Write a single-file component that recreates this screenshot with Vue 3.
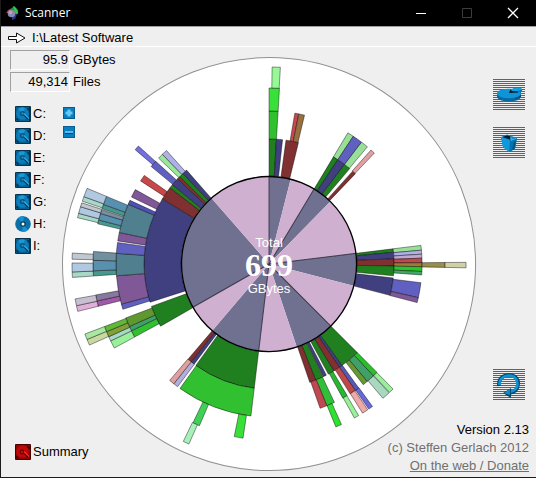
<script setup>
const drives = [
  { name: 'C:', kind: 'disk' },
  { name: 'D:', kind: 'disk' },
  { name: 'E:', kind: 'disk' },
  { name: 'F:', kind: 'disk' },
  { name: 'G:', kind: 'disk' },
  { name: 'H:', kind: 'cd' },
  { name: 'I:', kind: 'disk' },
]

// Ring boundaries, from the inner disc outwards
const radii = [88, 125, 153, 176, 197]

// Boundaries of the inner slices, alternating dark and light, clockwise from the top
const bounds = [0, 14.3, 31, 44.4, 83, 104.4, 135.1, 161.5, 186.8, 220.4, 240.4, 318.9, 360]

// [ring, start angle, end angle, colour]
const segments = [
  [1, 0, 3.4, '#208020'], [1, 3.4, 6.2, '#404080'], [2, 0, 3.4, '#30c030'],
  [3, 0, 3.4, '#38e038'], [4, 0.9, 3.3, '#98f898'],
  [1, 7.8, 13.6, '#803030'], [2, 9.7, 11.2, '#c84850'], [2, 11.2, 13.4, '#987040'],

  [1, 31, 33.4, '#208020'], [1, 33.4, 37.2, '#404080'], [1, 37.2, 40.2, '#208020'],
  [2, 31, 33.4, '#98e098'], [2, 33.4, 37.2, '#6060c0'], [2, 37.2, 40, '#98e098'],
  [1, 42, 43.7, '#803030'], [2, 41.8, 43.5, '#e0a0a0'],

  [1, 83, 84.6, '#208020'], [1, 84.6, 87.6, '#404080'], [1, 87.6, 90.9, '#803030'],
  [1, 90.9, 95.4, '#208020'], [1, 96.4, 104.5, '#404080'],
  [2, 83, 84.8, '#98e098'], [2, 84.8, 86.3, '#b0b0e8'], [2, 86.3, 87.8, '#c0a8d0'],
  [2, 87.8, 89.5, '#c04848'], [2, 89.5, 91, '#a07838'], [2, 91, 92.8, '#28c828'],
  [2, 92.8, 94.1, '#40a868'], [2, 97, 102.7, '#6060c0'], [2, 102.7, 104.6, '#805898'],
  [3, 89.5, 91.1, '#989048'], [4, 89.5, 91.1, '#d0d0a8'],

  [1, 135.1, 144.3, '#208020'], [1, 144.3, 145.7, '#404080'], [1, 145.7, 148.8, '#803030'],
  [1, 148.8, 151.7, '#208020'], [1, 152.7, 154.3, '#404080'],
  [1, 154.5, 158.1, '#208020'], [1, 158.1, 161, '#803030'],
  [2, 135.1, 137, '#28c028'], [2, 137, 140.1, '#40a068'], [2, 140.1, 142, '#689830'],
  [2, 144.1, 145.7, '#5858b8'], [2, 145.7, 148, '#c04848'], [2, 149.3, 151.2, '#28b830'],
  [2, 154.7, 157.8, '#30c038'], [2, 157.8, 160.5, '#c04850'],
  [3, 135.2, 136.8, '#98f098'], [3, 137, 139.7, '#a8d8c0'], [3, 144, 145.5, '#6868d8'],
  [3, 145.9, 147.9, '#f0a8a8'], [3, 149.4, 151, '#98f098'], [3, 155.7, 157.7, '#30e030'],

  [1, 186.8, 215.8, '#208020'], [1, 216.8, 218.5, '#404080'], [1, 218.5, 220.4, '#803030'],
  [2, 186.8, 215.6, '#30c030'], [2, 216.7, 218.5, '#b0b0e0'], [2, 218.5, 220.5, '#e0a0a0'],
  [3, 188.5, 191.4, '#38e038'], [3, 203.3, 205.6, '#40d058'], [4, 204, 205.8, '#a8f0b8'],

  [1, 240.2, 250.2, '#208020'], [2, 241.5, 244.1, '#30c030'], [2, 244.1, 245.9, '#40a068'],
  [2, 245.9, 249.4, '#609830'], [3, 241.5, 244.1, '#98f098'], [3, 244.1, 245.6, '#a8d8c8'],
  [3, 245.6, 247.4, '#80a038'], [3, 247.4, 249.2, '#60b838'],
  [4, 245.7, 247.5, '#c8d8a0'], [4, 247.5, 249.2, '#a8e8a0'],

  [1, 252.2, 301.4, '#404080'],
  [2, 252.8, 254.8, '#6060c0'], [2, 254.8, 265.6, '#805898'], [2, 265.6, 274, '#508090'],
  [2, 274, 278.1, '#6060c0'], [2, 278.7, 281.9, '#805898'], [2, 281.9, 293, '#508090'],
  [2, 293, 294.6, '#5050b8'], [2, 296, 299.1, '#805898'],
  [3, 256.1, 257.9, '#a058a8'], [3, 257.9, 259.9, '#8878a0'],
  [3, 266.1, 267.8, '#489890'], [3, 267.8, 271.2, '#5890b0'], [3, 271.2, 274.1, '#7090a0'],
  [3, 283.2, 284.5, '#489890'], [3, 284.5, 286.7, '#5890b0'], [3, 286.7, 288, '#7890a0'],
  [3, 288.3, 289.8, '#489890'], [3, 289.8, 292.6, '#5890b0'],
  [4, 256.1, 257.8, '#e0b0d8'], [4, 257.8, 259.8, '#c8c0d0'],
  [4, 266.1, 267.7, '#a8d8c8'], [4, 267.7, 270.3, '#b0c8e0'], [4, 271.4, 273.2, '#c0c8d0'],
  [4, 283.6, 284.9, '#a8d8c8'], [4, 284.9, 286.9, '#b0c8e0'], [4, 286.9, 288.1, '#c0c8d0'],
  [4, 288.6, 290, '#a8d8c8'], [4, 290, 292.6, '#b0c8e0'],

  [1, 301.4, 307.6, '#803030'], [1, 307.6, 309.4, '#208020'], [1, 309.4, 313, '#404080'],
  [1, 313, 314.4, '#803030'], [1, 314.4, 316.4, '#208020'], [1, 316.4, 318.7, '#404080'],
  [2, 302.9, 305.4, '#c84848'], [2, 309.6, 312.2, '#6060c0'], [3, 310.5, 312.1, '#7070e0'],
  [2, 313.8, 315.8, '#98e898'], [2, 315.8, 317.9, '#b0b0e8'],
]

function point(radius, angle) {
  const rad = (angle * Math.PI) / 180
  return `${(radius * Math.sin(rad)).toFixed(2)} ${(-radius * Math.cos(rad)).toFixed(2)}`
}

function arcPath([ring, from, to]) {
  const inner = radii[ring - 1]
  const outer = radii[ring]
  return `M${point(inner, from)}L${point(outer, from)}A${outer} ${outer} 0 0 1 ${point(outer, to)}L${point(inner, to)}A${inner} ${inner} 0 0 0 ${point(inner, from)}Z`
}

const slices = bounds.slice(0, -1).map((from, i) => ({
  path: `M0 0L${point(88, from)}A88 88 0 0 1 ${point(88, bounds[i + 1])}Z`,
  color: i % 2 ? '#d0b0d0' : '#707090',
}))
const spokes = bounds.slice(0, -1).filter((_, i) => i % 2 === 0).map((a) => `M0 0L${point(88, a)}`)
const shapes = segments.map((s) => ({ path: arcPath(s), color: s[3] }))
</script>

<template>
  <div class="window">
    <header class="titlebar">
      <svg class="app-icon" viewBox="0 0 14 14" aria-hidden="true">
        <path d="M5 3L8 0L12 4V8H8Z" fill="#18a038" />
        <path d="M7 0L10 2L12 7L10 8Z" fill="#30c850" />
        <path d="M2 4L6 2V7H0Z" fill="#a83848" />
        <path d="M6 9L11 8L9 13L6 14Z" fill="#283888" />
        <circle cx="5.500" cy="7.500" r="3.800" fill="#8c88aa" />
        <circle cx="4.500" cy="6.500" r="1.800" fill="#b4a8c0" />
      </svg>
      <h1>Scanner</h1>
      <div class="controls">
        <button type="button" aria-label="Minimize"><svg viewBox="0 0 12 12"><path d="M1 6.500H11" stroke="#fff" /></svg></button>
        <button type="button" aria-label="Maximize" disabled><svg viewBox="0 0 12 12"><path d="M1.500 1.500H10.500V10.500H1.500Z" stroke="#3c3c3c" /></svg></button>
        <button type="button" aria-label="Close"><svg viewBox="0 0 12 12"><path d="M1 1L11 11M11 1L1 11" stroke="#fff" stroke-width="1.300" /></svg></button>
      </div>
    </header>

    <div class="path">
      <svg viewBox="0 0 18 12" aria-hidden="true">
        <path d="M0.500 4.500H8.500V1L17 6L8.500 11V7.500H0.500Z" fill="#fff" stroke="#111" />
      </svg>
      <span>I:\Latest Software</span>
    </div>

    <main class="stage">
      <svg class="chart" viewBox="0 0 418 418" role="img" aria-label="Disk usage">
        <g transform="translate(209 209)">
          <circle r="206.500" fill="#fff" stroke="#909090" />
          <path v-for="(s, i) in shapes" :key="i" :d="s.path" :fill="s.color" class="segment" />
          <path v-for="(s, i) in slices" :key="'s' + i" :d="s.path" :fill="s.color" />
          <path v-for="d in spokes" :key="d" :d="d" class="spoke" />
          <circle r="87.500" class="rim" />
          <text y="-17" class="caption">Total</text>
          <text y="12" class="total">699</text>
          <text y="29" class="caption">GBytes</text>
        </g>
      </svg>

      <aside class="left">
        <dl class="stats">
          <div><dd>95.9</dd><dt>GBytes</dt></div>
          <div><dd>49,314</dd><dt>Files</dt></div>
        </dl>
        <div class="drive-area">
          <ul class="drives">
            <li v-for="d in drives" :key="d.name">
              <button type="button" class="drive">
                <svg v-if="d.kind === 'disk'" viewBox="0 0 16 16" aria-hidden="true">
                  <rect width="16" height="16" rx="1" fill="#06344e" />
                  <rect x="1" y="1" width="13" height="14" fill="#075f90" />
                  <circle cx="7.500" cy="7.500" r="6.300" fill="#087fbc" />
                  <path d="M3 3A6 6 0 0 1 10 2L7.500 7.500Z" fill="#1e98d4" />
                  <circle cx="7.500" cy="7.500" r="2.600" fill="#075078" />
                  <circle cx="7.500" cy="7.500" r="1.200" fill="#1e88bc" />
                  <path d="M9.500 9.500L13 13" fill="none" stroke="#03283e" stroke-width="1.200" />
                  <path d="M9 7.500L14 12.500" fill="none" stroke="#38a8dc" stroke-width="1.200" />
                  <path d="M12 3H14V5M2 12V14H4" fill="none" stroke="#03283e" />
                </svg>
                <svg v-else viewBox="0 0 16 16" aria-hidden="true">
                  <circle cx="8" cy="8" r="7.800" fill="#0a70a8" />
                  <path d="M8 8L3 2A8 8 0 0 1 9 0ZM8 8L13 14A8 8 0 0 1 7 16Z" fill="#1c90cc" />
                  <circle cx="8" cy="8" r="2.800" fill="#064060" />
                  <circle cx="8" cy="8" r="1.500" fill="#fff" />
                </svg>
                <span>{{ d.name }}</span>
              </button>
            </li>
          </ul>
          <div class="zoom">
            <button type="button" aria-label="Show more"><svg viewBox="0 0 12 12"><path d="M0 0H12V12H0Z" fill="#0a5c8e" /><path d="M1 1H11V11H1Z" fill="#0880c0" /><path d="M4.500 2.500H7.500V4.500H9.500V7.500H7.500V9.500H4.500V7.500H2.500V4.500H4.500Z" fill="#68c8f8" /></svg></button>
            <button type="button" aria-label="Show less"><svg viewBox="0 0 12 12"><path d="M0 0H12V12H0Z" fill="#0a5c8e" /><path d="M1 1H11V11H1Z" fill="#0880c0" /><path d="M2 5H10V8H2Z" fill="#044870" /><path d="M2 5H10V7H2Z" fill="#58bcf0" /></svg></button>
          </div>
        </div>
        <button type="button" class="drive summary">
          <svg viewBox="0 0 16 16" aria-hidden="true">
            <rect width="16" height="16" rx="1" fill="#480000" />
            <rect x="1" y="1" width="14" height="14" fill="#900404" />
            <circle cx="7.500" cy="7.500" r="6.300" fill="#c00808" />
            <circle cx="7" cy="8" r="2.400" fill="#700000" />
            <circle cx="7" cy="8" r="1.200" fill="#b01818" />
            <path d="M9.500 9.500L13 13M12 3H14V5M2 12V14H4" fill="none" stroke="#380000" stroke-width="1.200" />
            <path d="M9 7.500L14 12.500" fill="none" stroke="#f03030" stroke-width="1.200" />
          </svg>
          <span>Summary</span>
        </button>
      </aside>

      <aside class="right">
        <div class="tools">
          <button type="button" class="tool" aria-label="Free space">
            <svg viewBox="0 0 32 31">
              <path d="M4 15V18C5 21 10 22.500 16 22.500S27 21 28 18V13Z" fill="#0868a0" />
              <path d="M22 20.500L28 18V13L22 16Z" fill="#054870" />
              <ellipse cx="16" cy="14.500" rx="12" ry="4.800" fill="#0e94d8" />
              <path d="M16 13L20 9.500C23 8.500 27 8.500 29 10V13L24 13.500Z" fill="#0878b4" />
              <path d="M17 12.500L20 9.500C23 8.500 27 8.500 29 10L24 12.500Z" fill="#10a0e4" />
              <path d="M16 14L17.500 10.500L19 12L25 12.500V13.500Z" fill="#021c2c" />
            </svg>
          </button>
          <button type="button" class="tool" aria-label="Recycle bin">
            <svg viewBox="0 0 32 31">
              <path d="M8 10L14 7.500L24 11L22 22L16 25L10 20Z" fill="#0a84c4" />
              <path d="M9.500 10L14 8.500L18 9.500L17 12.500Z" fill="#021824" />
              <path d="M17 13L24 11L22 22L16 25Z" fill="#0672ae" />
              <path d="M8 10L17 13.500L16 25L10 20Z" fill="#1098dc" />
              <path d="M17 9L20 12L24 10.500L23 12L18 14Z" fill="#38acE4" />
              <path d="M21 15L23 14L21 22L19 23Z" fill="#045480" />
            </svg>
          </button>
        </div>
        <div class="bottom">
          <button type="button" class="tool" aria-label="Rescan">
            <svg viewBox="0 0 32 31">
              <path d="M6 17C5 10 10 6 16 6C23 6 26 11 25 16C24.500 20 22 23 17 24" fill="none" stroke="#054870" stroke-width="3.600" />
              <path d="M6.500 16C6 10 11 6.500 16 6.500C21.500 6.500 25 11 24.500 16C24 19 21 22 17 23" fill="none" stroke="#0e94d4" stroke-width="2.600" />
              <path d="M10 24L18 19V29Z" fill="#054870" />
              <path d="M11 24L17 20V26Z" fill="#0e8cc8" />
            </svg>
          </button>
          <p class="version">Version 2.13</p>
          <p class="credit">(c) Steffen Gerlach 2012</p>
          <p class="credit"><a href="#">On the web / Donate</a></p>
        </div>
      </aside>
    </main>
  </div>
</template>

<style>
body {
  margin: 0;
}
</style>

<style scoped>
.window {
  display: flex;
  flex-direction: column;
  min-height: 100vh;
  box-sizing: border-box;
  border-left: 1px solid #1c1c1c;
  border-bottom: 1px solid #1c1c1c;
  background: #efefef;
  color: #000;
  font: 13px/18px "Liberation Sans", Arial, sans-serif;
}
button {
  margin: 0;
  padding: 0;
  border: 0;
  background: none;
  color: inherit;
  font: inherit;
}
svg {
  display: block;
}
h1, p, dl, dd, ul {
  margin: 0;
  padding: 0;
}
.titlebar {
  display: flex;
  align-items: center;
  height: 26px;
  padding-left: 5px;
  background: #000;
  color: #fff;
}
.app-icon {
  width: 14px;
  height: 14px;
}
h1 {
  margin-left: 5px;
  font: 12px/18px "Open Sans", "Noto Sans", sans-serif;
}
.controls {
  display: flex;
  margin-left: auto;
}
.controls button {
  display: grid;
  place-items: center;
  width: 46px;
  height: 26px;
}
.controls svg {
  width: 12px;
  height: 12px;
  fill: none;
}
.path {
  display: flex;
  align-items: center;
  gap: 6px;
  height: 21px;
  padding: 2px 7px 0;
  box-sizing: border-box;
  border-top: 1px solid #a0a0a0;
  border-bottom: 1px solid #fff;
}
.path svg {
  width: 18px;
  height: 12px;
}
.stage {
  flex: 1;
  display: grid;
  grid-template-columns: auto 1fr auto;
}
.chart {
  grid-area: 1 / 1 / 2 / -1;
  justify-self: center;
  align-self: start;
  width: 78vw;
  margin: 8px 0 0 2px;
}
.segment {
  stroke: #000;
  stroke-opacity: 0.6;
  stroke-width: 0.7;
}
.spoke {
  stroke: #202030;
  stroke-opacity: 0.8;
}
.rim {
  fill: none;
  stroke: #000;
  stroke-width: 1.3;
}
.caption {
  fill: #fff;
  font-size: 13px;
  text-anchor: middle;
}
.total {
  fill: #fff;
  font: bold 32px "Liberation Serif", "Times New Roman", serif;
  text-anchor: middle;
}
.left {
  grid-area: 1 / 1;
  display: flex;
  flex-direction: column;
  align-items: flex-start;
  padding: 3px 0 17px 9px;
}
.stats {
  display: flex;
  flex-direction: column;
  gap: 2px;
}
.stats div {
  display: flex;
  gap: 3px;
}
.stats dd {
  width: 60px;
  height: 20px;
  box-sizing: border-box;
  padding-right: 1px;
  border: 1px solid;
  border-color: #a0a0a0 #fff #fff #a0a0a0;
  text-align: right;
}
.stats dt {
  line-height: 20px;
}
.drive-area {
  display: flex;
  gap: 16px;
  margin: 14px 0 0 5px;
}
.drives {
  display: flex;
  flex-direction: column;
  gap: 6px;
  list-style: none;
}
.drive {
  display: flex;
  align-items: center;
  gap: 2px;
  height: 16px;
}
.drive svg {
  width: 16px;
  height: 16px;
}
.summary {
  margin: auto 0 0 5px;
}
.zoom {
  display: flex;
  flex-direction: column;
  gap: 7px;
  padding-top: 1px;
}
.zoom svg {
  width: 12px;
  height: 12px;
}
.right {
  grid-area: 1 / 3;
  display: flex;
  flex-direction: column;
  justify-content: space-between;
  padding: 32px 7px 2px 0;
  text-align: right;
}
.tools, .bottom {
  display: flex;
  flex-direction: column;
  align-items: flex-end;
}
.tools {
  gap: 17px;
}
.tool {
  width: 32px;
  height: 31px;
  margin-right: 4px;
  background: repeating-linear-gradient(#4a639c 0 1px, #efefef 1px 2px);
}
.version {
  margin-top: 21px;
}
.credit, .credit a {
  color: #707070;
}
</style>
